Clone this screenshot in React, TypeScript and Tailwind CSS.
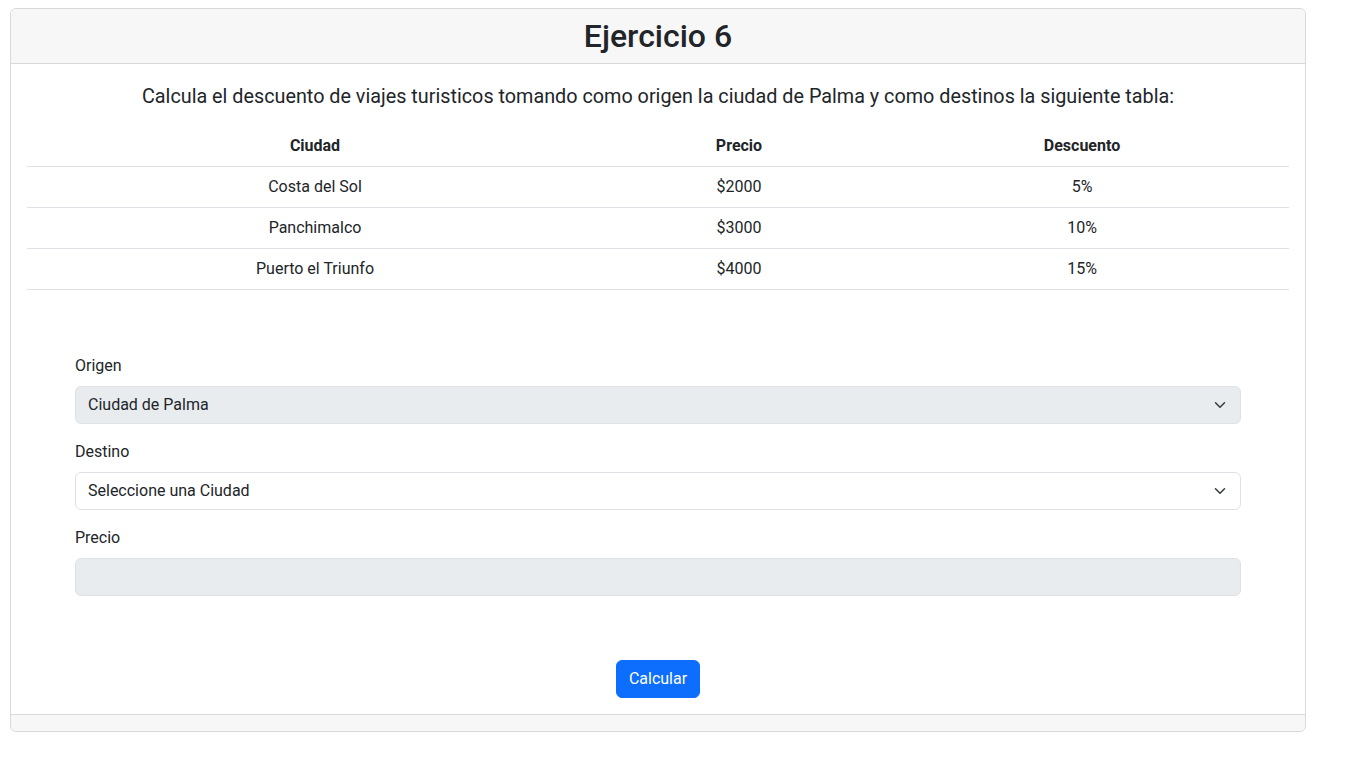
import React from "react";

const font = { fontFamily: '"Segoe UI", Roboto, "Liberation Sans", sans-serif' };

function Chevron() {
  return (
    <svg width="16" height="12" viewBox="0 0 16 16" className="absolute right-[12px] top-1/2 -translate-y-1/2">
      <path d="m2 5 6 6 6-6" fill="none" stroke="#343a40" strokeLinecap="round" strokeLinejoin="round" strokeWidth="2" />
    </svg>
  );
}

export default function App() {
  const rows = [
    ["Costa del Sol", "$2000", "5%"],
    ["Panchimalco", "$3000", "10%"],
    ["Puerto el Triunfo", "$4000", "15%"],
  ];
  return (
    <div className="bg-white min-h-[768px] text-[#212529] text-[16px] leading-[24px]" style={font}>
      <div className="pt-[8px] pl-[10px] w-[1306px]">
        <div className="border border-[#d9d9d9] rounded-[6px] flex flex-col">
          <div className="bg-[#f7f7f7] border-b border-[#d9d9d9] rounded-t-[6px] px-[16px] py-[8px]">
            <h2 className="text-center text-[32px] leading-[38px] font-medium m-0">Ejercicio 6</h2>
          </div>
          <div className="p-[16px]">
            <p className="text-center text-[19.8px] leading-[30px] mt-[2px] mb-[14px]">
              Calcula el descuento de viajes turisticos tomando como origen la ciudad de Palma y como destinos la siguiente tabla:
            </p>
            <table className="w-full border-collapse">
              <thead>
                <tr className="border-b border-[#dee2e6]">
                  <th className="w-[576px] py-[8px] font-bold text-center">Ciudad</th>
                  <th className="w-[272px] py-[8px] font-bold text-center">Precio</th>
                  <th className="w-[414px] py-[8px] font-bold text-center">Descuento</th>
                </tr>
              </thead>
              <tbody>
                {rows.map((r) => (
                  <tr key={r[0]} className="border-b border-[#dee2e6]">
                    {r.map((c) => (
                      <td key={c} className="py-[8px] text-center">{c}</td>
                    ))}
                  </tr>
                ))}
              </tbody>
            </table>
            <div className="mt-[64px] mx-[48px]">
              <div className="mb-[16px]">
                <div className="mb-[8px]">Origen</div>
                <div className="relative h-[38px] bg-[#e9ecef] border border-[#dee2e6] rounded-[6px] pl-[12px] flex items-center">
                  Ciudad de Palma
                  <Chevron />
                </div>
              </div>
              <div className="mb-[16px]">
                <div className="mb-[8px]">Destino</div>
                <div className="relative h-[38px] bg-white border border-[#dee2e6] rounded-[6px] pl-[12px] flex items-center">
                  Seleccione una Ciudad
                  <Chevron />
                </div>
              </div>
              <div className="mb-[16px]">
                <div className="mb-[8px]">Precio</div>
                <div className="h-[38px] bg-[#e9ecef] border border-[#dee2e6] rounded-[6px]"></div>
              </div>
            </div>
            <div className="flex justify-center mt-[64px]">
              <button className="h-[38px] px-[12px] bg-[#0d6efd] text-white rounded-[6px] border border-[#0d6efd]">Calcular</button>
            </div>
          </div>
          <div className="bg-[#f7f7f7] border-t border-[#d9d9d9] rounded-b-[6px] h-[17px]"></div>
        </div>
      </div>
    </div>
  );
}
